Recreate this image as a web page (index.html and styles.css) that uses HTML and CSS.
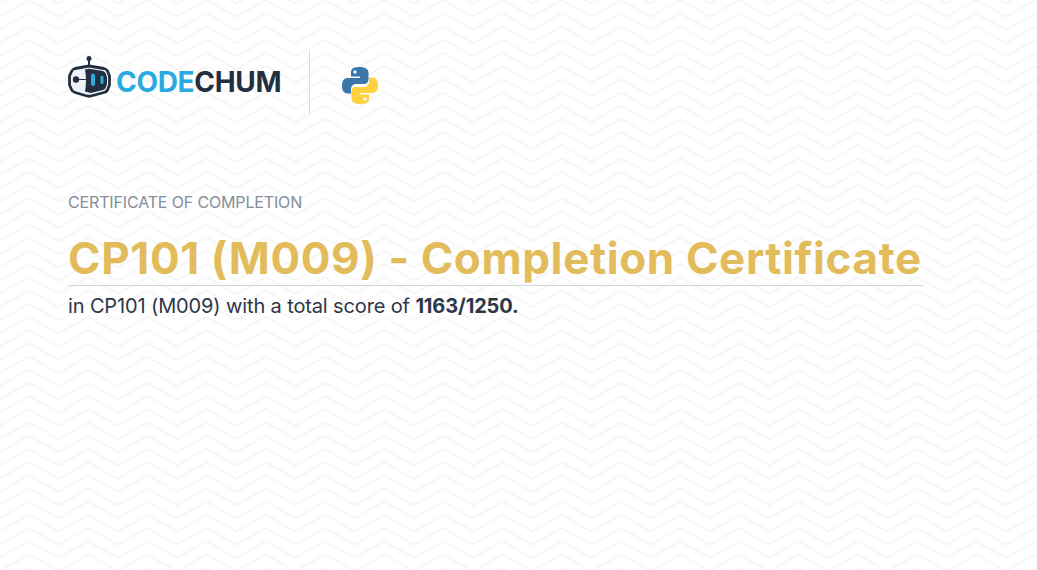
FILE: index.html
```html
<!DOCTYPE html>
<html lang="en">
<head>
    <meta charset="UTF-8">
    <meta name="viewport" content="width=device-width, initial-scale=1.0">
    <title>CP101 (M009) - Completion Certificate</title>
    <link rel="stylesheet" href="styles.css">
</head>
<body>
    <div class="certificate">
        <header class="brand-row">
            <div class="brand">
                <svg class="robot" width="44" height="43" viewBox="0 0 44 43">
                    <circle cx="21" cy="3.500" r="2.500" fill="#232f3e"/>
                    <rect x="20" y="4" width="2" height="7" fill="#232f3e"/>
                    <path d="M7 13.500 L21 11 L36 13.500 Q38.500 14 39.500 16 L41.500 21 L41.500 30 L39.500 35 Q38.500 37 36 37.500 L23 41 Q21 41.500 19 41 L7 37.500 Q4.500 36.800 3.500 34.500 L1.500 30 L1.500 21 L3.500 16.500 Q4.500 14.200 7 13.500 Z" fill="#eef1f5" stroke="#232f3e" stroke-width="2.800" stroke-linejoin="round"/>
                    <path d="M17 14.500 L21 13.800 L35 16 Q37 16.500 37.800 18.500 L39 22 L39 29 L37.800 32.500 Q37 34.500 35 35 L23 38 L17 36.500 Q19 25 17 14.500 Z" fill="#232f3e"/>
                    <rect x="8" y="24" width="10" height="1" fill="#232f3e"/>
                    <circle cx="8" cy="24.500" r="3.200" fill="#232f3e"/>
                    <rect x="23" y="18.500" width="4" height="12.500" rx="2" fill="#29abe2"/>
                    <rect x="32.500" y="20.500" width="3" height="8.500" rx="1.500" fill="#29abe2"/>
                </svg>
                <span class="wordmark"><span class="wordmark-code">CODE</span>CHUM</span>
            </div>
            <div class="divider"></div>
            <svg class="python" width="36" height="39" viewBox="0 0 36 38">
                <path d="M17.500 0.500 C10 0.500 9 3.500 9 6 L9 10 L18 10 L18 11.500 L5.500 11.500 C2 11.500 0 14.500 0 19 C0 24 2 27 5.500 27 L9 27 L9 22.500 C9 19.500 11.500 17.500 14 17.500 L22 17.500 C24.500 17.500 26.500 15.500 26.500 13 L26.500 6 C26.500 3 24 0.500 17.500 0.500 Z" fill="#3b76a8"/>
                <circle cx="13" cy="5.500" r="1.700" fill="#f4f6f8"/>
                <path d="M18.500 37.500 C26 37.500 27 34.500 27 32 L27 28 L18 28 L18 26.500 L30.500 26.500 C34 26.500 36 23.500 36 19 C36 14 34 11 30.500 11 L27 11 L27 15.500 C27 18.500 24.500 20.500 22 20.500 L14 20.500 C11.500 20.500 9.500 22.500 9.500 25 L9.500 32 C9.500 35 12 37.500 18.500 37.500 Z" fill="#fdd23e"/>
                <circle cx="23" cy="32.500" r="1.700" fill="#f4f6f8"/>
            </svg>
        </header>

        <p class="eyebrow">CERTIFICATE OF COMPLETION</p>
        <h1 class="title">CP101 (M009) - Completion Certificate</h1>
        <p class="summary">in CP101 (M009) with a total score of <strong>1163/1250.</strong></p>
    </div>
</body>
</html>
```

FILE: styles.css
```css
* {
    margin: 0;
    padding: 0;
    box-sizing: border-box;
}

body {
    font-family: Inter, 'Liberation Sans', sans-serif;
    color: #2d3748;
    background-color: #fff;
    background-repeat: no-repeat;
    background-image: url("data:image/svg+xml,%3Csvg xmlns='http://www.w3.org/2000/svg' width='1037' height='570'%3E%3Cdefs%3E%3Cpattern id='z' width='59.2' height='13.2' patternUnits='userSpaceOnUse' x='29'%3E%3Cg fill='none' stroke='%23f6f6f6' stroke-width='2'%3E%3Cpath d='M0 0L29.600 16.700L59.200 0'/%3E%3Cpath d='M0 -13.200L29.600 3.500L59.200 -13.200'/%3E%3Cpath d='M0 13.200L29.600 29.900L59.200 13.200'/%3E%3C/g%3E%3C/pattern%3E%3C/defs%3E%3Crect width='1037' height='570' fill='url(%23z)'/%3E%3C/svg%3E");
    height: 570px;
    overflow: hidden;
}

.certificate {
    padding: 50px 68px 0;
}

.brand-row {
    display: flex;
    align-items: center;
    height: 64px;
}

.brand {
    display: flex;
    align-items: center;
    gap: 4px;
    width: 241px;
    height: 64px;
}

.robot {
    align-self: flex-start;
    margin-top: 5px;
}

.wordmark {
    font-size: 28px;
    font-weight: 700;
    letter-spacing: -0.3px;
    color: #232f3e;
}

.wordmark-code {
    color: #29abe2;
}

.divider {
    width: 1px;
    height: 64px;
    background: #d5dce4;
}

.python {
    margin-left: 32px;
    margin-top: 7px;
}

.eyebrow {
    margin-top: 78px;
    font-size: 16px;
    line-height: 20px;
    letter-spacing: -0.15px;
    color: #858e9c;
}

.title {
    margin-top: 21px;
    width: 856px;
    height: 53px;
    font-size: 44px;
    line-height: 50px;
    letter-spacing: 0.62px;
    font-weight: 700;
    color: #e2bc5b;
    border-bottom: 1px solid #d4d6d8;
    white-space: nowrap;
}

.summary {
    margin-top: 6px;
    font-size: 20px;
    line-height: 28px;
    letter-spacing: -0.13px;
}
```
